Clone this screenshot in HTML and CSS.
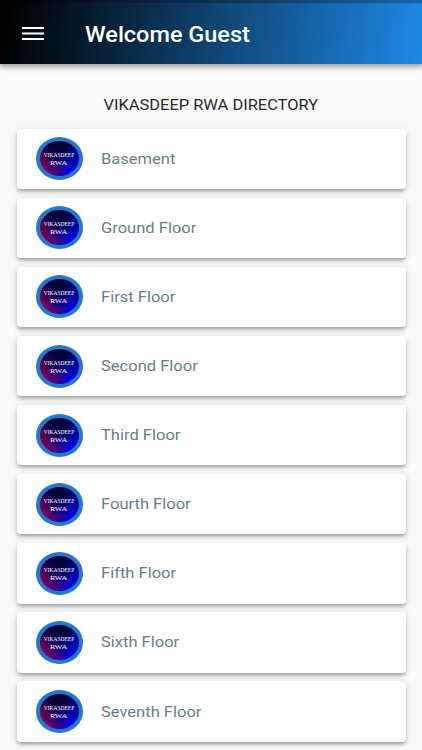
FILE: index.html
```html
<!DOCTYPE html>
<html lang="en">

<head>
    <meta charset="UTF-8">
    <meta name="viewport" content="width=device-width, initial-scale=1.0">
    <title>Vikasdeep RWA Directory</title>
    <link rel="stylesheet" href="styles.css">
</head>

<body>
    <header>
        <button class="menu-button" aria-label="Menu">
            <svg width="22" height="14" viewBox="0 0 22 14">
                <path d="M0 1h22M0 6.5h22M0 12h22" stroke="#fff" stroke-width="2.1" />
            </svg>
        </button>
        <h1>Welcome Guest</h1>
    </header>
    <main>
        <h2><span>VIKASDEEP RWA DIRECTORY</span></h2>
        <ul id="floor-list">
            <!-- Floors will be dynamically added here -->
        </ul>
    </main>

    <script>
        const floors = [
            'Basement',
            'Ground Floor',
            'First Floor',
            'Second Floor',
            'Third Floor',
            'Fourth Floor',
            'Fifth Floor',
            'Sixth Floor',
            'Seventh Floor'
        ];

        // Show one card per floor
        document.getElementById('floor-list').innerHTML = floors.map(floor => `
        <li class="card">
          <div class="logo">
            <span class="logo-name">VIKASDEEP</span>
            <span class="logo-rwa">RWA</span>
          </div>
          <span class="floor-name">${floor}</span>
        </li>
      `).join('');
    </script>
</body>

</html>
```
FILE: styles.css
```css
/* Reset Styles */
* {
    margin: 0;
    padding: 0;
    box-sizing: border-box;
}

body {
    height: 750px;
    overflow: hidden;
    font-family: Roboto, sans-serif;
    background-color: #fafafa;
}

/* Header */
header {
    position: relative;
    display: flex;
    align-items: center;
    height: 63.5px;
    padding: 4px 22px 0 22.4px;
    border-top: 3px solid rgba(0, 0, 0, 0.25);
    background: linear-gradient(98deg, #000 2%, #1e88e5) border-box;
    box-shadow: 0 2px 4px rgba(0, 0, 0, 0.2), 0 4px 5px rgba(0, 0, 0, 0.14), 0 1px 10px rgba(0, 0, 0, 0.12);
}

.menu-button {
    display: flex;
    width: 22px;
    margin-right: 40.6px;
    margin-top: -2px;
    background: none;
    border: none;
}

header h1 {
    color: #fff;
    font-size: 21.6px;
    font-weight: 500;
    line-height: 26px;
    white-space: nowrap;
    transform: scaleX(1.087);
    transform-origin: left;
}

/* Directory */
main {
    padding: 31.5px 16px 0 16.5px;
}

h2 {
    margin-bottom: 13.5px;
    color: #2a2a2a;
    font-size: 15.3px;
    font-weight: 400;
    line-height: 20px;
    text-align: center;
}

h2 span {
    display: inline-block;
    transform: scaleX(1.075);
}

#floor-list {
    display: flex;
    flex-direction: column;
    gap: 8.6px;
    list-style: none;
}

.card {
    display: flex;
    align-items: center;
    height: 60.5px;
    padding-left: 19px;
    border-radius: 4px;
    background-color: #fff;
    box-shadow: 0 3px 3px -1px rgba(0, 0, 0, 0.2), 0 3px 5px rgba(0, 0, 0, 0.15), 0 1px 9px rgba(0, 0, 0, 0.09);
}

.logo {
    display: flex;
    flex-direction: column;
    align-items: center;
    justify-content: center;
    width: 47px;
    height: 43px;
    padding-top: 2px;
    margin-right: 18.1px;
    border: 4px solid #2377cc;
    border-radius: 50%;
    background: radial-gradient(circle at 50% 0, #000238 20%, rgba(0, 2, 80, 0.5) 55%, transparent 85%),
        linear-gradient(to right, #a0004c 5%, #40008c 45%, #0000f0 75%);
    color: #fff;
    font-family: "Liberation Serif", serif;
    white-space: nowrap;
}

.logo-name {
    font-size: 5.5px;
    line-height: 6px;
}

.logo-rwa {
    margin-top: 1px;
    font-size: 7px;
    line-height: 8px;
    transform: scaleX(1.13);
}

.floor-name {
    color: #667f8a;
    font-size: 15.3px;
    line-height: 20px;
    transform: scaleX(1.08);
    transform-origin: left;
}
```
